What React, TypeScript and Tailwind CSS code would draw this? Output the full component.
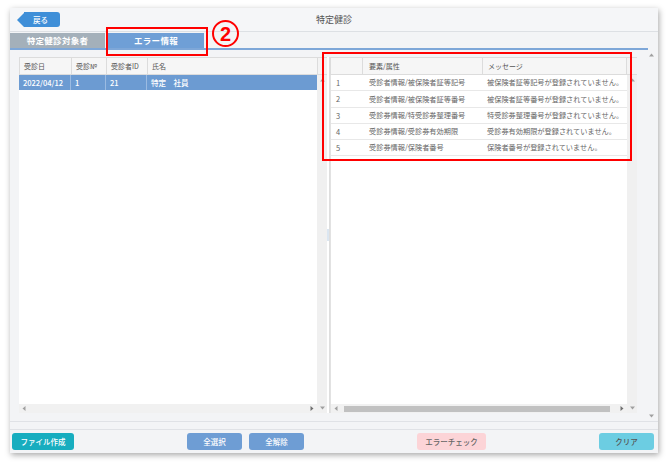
import React from "react";

const UpArrow = () => (
  <svg width="5" height="4" viewBox="0 0 5 4"><path d="M0 3.5 L2.5 0.5 L5 3.5 Z" fill="#a0a0a0" /></svg>
);
const DownArrow = () => (
  <svg width="5" height="4" viewBox="0 0 5 4"><path d="M0 0.5 L2.5 3.5 L5 0.5 Z" fill="#a0a0a0" /></svg>
);
const LeftArrow = () => (
  <svg width="4" height="5" viewBox="0 0 4 5"><path d="M3.5 0 L0.5 2.5 L3.5 5 Z" fill="#a0a0a0" /></svg>
);
const RightArrow = () => (
  <svg width="4" height="5" viewBox="0 0 4 5"><path d="M0.5 0 L3.5 2.5 L0.5 5 Z" fill="#707070" /></svg>
);

const errors = [
  ["1", "受診者情報/被保険者証等記号", "被保険者証等記号が登録されていません。"],
  ["2", "受診者情報/被保険者証等番号", "被保険者証等番号が登録されていません。"],
  ["3", "受診券情報/特受診券整理番号", "特受診券整理番号が登録されていません。"],
  ["4", "受診券情報/受診券有効期限", "受診券有効期限が登録されていません。"],
  ["5", "受診券情報/保険者番号", "保険者番号が登録されていません。"],
];

export default function App() {
  return (
    <div className="relative w-[668px] h-[464px] bg-white pt-[8px] pl-[10px] font-['Noto_Sans_CJK_JP','Noto_Sans',sans-serif] overflow-hidden">
      <div className="w-[648px] h-[445px] bg-[#f3f4f6] shadow-[1px_2px_6px_rgba(0,0,0,0.35)] flex flex-col">
        {/* header */}
        <div className="h-[24px] shrink-0 border-b border-[#dde0e4] bg-[#f5f6f8] grid grid-cols-[1fr_auto_1fr] items-center">
          <div className="flex items-center pl-[7px]">
            <div className="w-0 h-0 border-y-[7.5px] border-y-transparent border-r-[7px] border-r-[#3f8fd8]" />
            <div className="w-[36px] h-[15px] bg-[#3f8fd8] rounded-r-[3px] flex items-center justify-center text-white text-[7.5px] font-medium pr-[3px]">
              戻る
            </div>
          </div>
          <div className="text-[9px] text-[#555] leading-none">特定健診</div>
          <div />
        </div>
        {/* tabs */}
        <div className="mt-[1px] h-[17px] shrink-0 border-b-2 border-[#7ea7d8] flex items-end gap-[3px] mr-[10px]">
          <div className="w-[95px] h-[15px] bg-[#a4b0ba] text-white text-[8.5px] font-semibold flex items-center justify-center tracking-[0.3px]">
            特定健診対象者
          </div>
          <div className="w-[96px] h-[15px] bg-[#6f9fd6] text-white text-[8.5px] font-semibold flex items-center justify-center tracking-[0.3px]">
            エラー情報
          </div>
        </div>
        {/* body */}
        <div className="h-[371px] shrink-0 flex">
          <div className="flex pl-[9px] pt-[7px] pb-[8px] h-full">
            {/* left panel */}
            <div className="w-[308px] h-full bg-white flex flex-col">
              <div className="flex h-[18px] shrink-0 bg-[#f6f6f6] border-y border-l border-[#dcdcdc] text-[7px] text-[#555]">
                <div className="w-[52px] border-r border-[#dcdcdc] flex items-center pl-[4px]">受診日</div>
                <div className="w-[35px] border-r border-[#dcdcdc] flex items-center pl-[4px]">受診№</div>
                <div className="w-[41px] border-r border-[#dcdcdc] flex items-center pl-[4px]">受診者ID</div>
                <div className="w-[170px] border-r border-[#dcdcdc] flex items-center pl-[4px]">氏名</div>
                <div className="flex-1 bg-[#f3f3f3]" />
              </div>
              <div className="flex-1 flex min-h-0">
                <div className="w-[298px] flex flex-col">
                  <div className="flex h-[16px] bg-[#6c9bd2] text-white text-[7.5px] font-medium border-b border-white">
                    <div className="w-[52px] border-r border-[#9bbbe2] flex items-center pl-[4px]">2022/04/12</div>
                    <div className="w-[35px] border-r border-[#9bbbe2] flex items-center pl-[4px]">1</div>
                    <div className="w-[41px] border-r border-[#9bbbe2] flex items-center pl-[4px]">21</div>
                    <div className="w-[170px] flex items-center pl-[4px]">特定　社員</div>
                  </div>
                  <div className="flex-1" />
                  <div className="h-[9px] bg-[#f1f1f1] flex items-center justify-between px-[3px]">
                    <LeftArrow />
                    <RightArrow />
                  </div>
                </div>
                <div className="w-[10px] bg-[#f0f0f0] flex flex-col items-center justify-between pt-[3px] pb-[3px]">
                  <UpArrow />
                  <DownArrow />
                </div>
              </div>
            </div>
            {/* splitter */}
            <div className="w-[3px] h-full bg-white border-r border-[#dedede] flex items-center">
              <div className="w-[2px] h-[12px] bg-[#dbe6f1]" />
            </div>
            {/* right panel */}
            <div className="w-[307px] h-full bg-white flex flex-col">
              <div className="flex h-[18px] shrink-0 bg-[#f6f6f6] border-y border-l border-[#dcdcdc] text-[7px] text-[#555]">
                <div className="w-[32px] border-r border-[#dcdcdc]" />
                <div className="w-[120px] border-r border-[#dcdcdc] flex items-center pl-[6px]">要素/属性</div>
                <div className="w-[144px] border-r border-[#dcdcdc] flex items-center pl-[5px]">メッセージ</div>
                <div className="flex-1 bg-[#f3f3f3]" />
              </div>
              <div className="flex-1 flex min-h-0">
                <div className="w-[297px] flex flex-col border-l border-[#e2e2e2]">
                  {errors.map((r) => (
                    <div key={r[0]} className="flex h-[16.3px] shrink-0 border-b border-[#e8e8e8] text-[7.2px] text-[#666]">
                      <div className="w-[32px] flex items-center pl-[5px] text-[7.5px]">{r[0]}</div>
                      <div className="w-[120px] flex items-center pl-[6px] whitespace-nowrap">{r[1]}</div>
                      <div className="w-[144px] flex items-center pl-[4px] whitespace-nowrap">{r[2]}</div>
                    </div>
                  ))}
                  <div className="flex-1" />
                  <div className="h-[9px] bg-[#f1f1f1] flex items-center px-[3px]">
                    <LeftArrow />
                    <div className="ml-[6px] w-[266px] h-[6px] bg-[#c1c1c1]" />
                    <div className="flex-1" />
                    <RightArrow />
                  </div>
                </div>
                <div className="w-[10px] bg-[#f0f0f0] flex flex-col items-center justify-between pt-[3px] pb-[3px]">
                  <UpArrow />
                  <DownArrow />
                </div>
              </div>
            </div>
          </div>
          {/* outer scroll */}
          <div className="flex-1 flex flex-col items-end justify-between pt-[3px] pb-[3px] pr-[4px]">
            <UpArrow />
            <DownArrow />
          </div>
        </div>
        <div className="h-[8px] shrink-0 border-t border-[#e0e2e6]" />
        {/* footer */}
        <div className="h-[24px] shrink-0 border-t border-[#e0e2e6] flex items-start pt-[3px] pl-[2px] text-[7.5px] font-medium">
          <div className="w-[62px] h-[17px] rounded-[3px] bg-[#17adbf] text-white flex items-center justify-center">ファイル作成</div>
          <div className="ml-[113px] w-[55px] h-[17px] rounded-[3px] bg-[#6e9dd4] text-white flex items-center justify-center">全選択</div>
          <div className="ml-[7px] w-[55px] h-[17px] rounded-[3px] bg-[#6e9dd4] text-white flex items-center justify-center">全解除</div>
          <div className="ml-[113px] w-[69px] h-[17px] rounded-[3px] bg-[#fcd4d7] text-[#666] flex items-center justify-center">エラーチェック</div>
          <div className="ml-[113px] w-[55px] h-[17px] rounded-[3px] bg-[#6ccde2] text-[#555] flex items-center justify-center">クリア</div>
        </div>
      </div>

      {/* annotations */}
      <div className="absolute left-[106px] top-[27px] w-[102px] h-[29px] border-2 border-[#ff0000]" />
      <div className="absolute left-[212px] top-[20px] w-[27px] h-[27px] rounded-full border-[2.5px] border-[#ff0000] flex items-center justify-center text-[#ff0000] text-[20px] font-bold leading-none font-['Liberation_Sans',sans-serif]">
        2
      </div>
      <div className="absolute left-[322px] top-[52px] w-[310px] h-[109px] border-2 border-[#ff0000]" />
    </div>
  );
}
